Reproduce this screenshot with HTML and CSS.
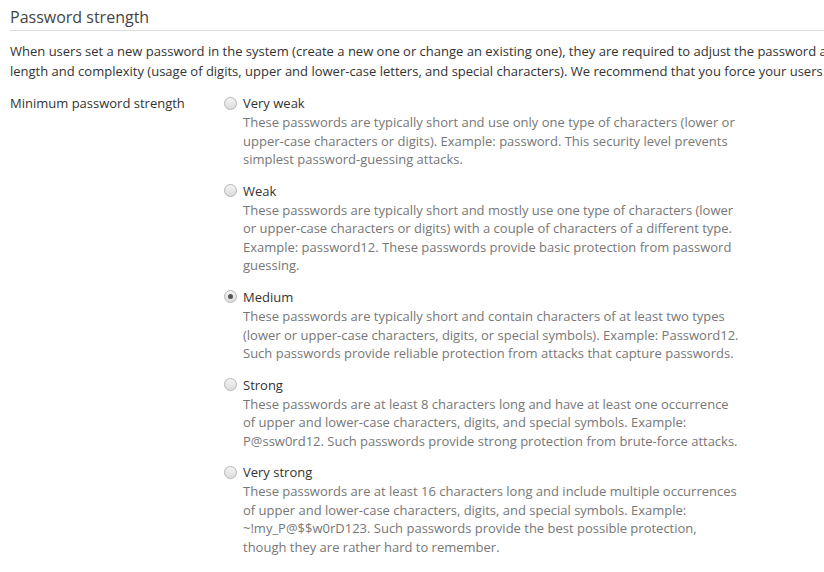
FILE: index.html
```html
<!DOCTYPE html>
<html lang="en">
<head>
<meta charset="utf-8">
<title>Password strength</title>
<link rel="stylesheet" href="styles.css">
</head>
<body>
<div class="page">
  <h2 class="section-title">Password strength</h2>
  <p class="intro">When users set a new password in the system (create a new one or change an existing one), they are required to adjust the password according to the security policy. The password strength is determined by its length and complexity (usage of digits, upper and lower-case letters, and special characters). We recommend that you force your users to use strong passwords.</p>
  <div class="form-row">
    <div class="row-label">Minimum password strength</div>
    <div class="options">
      <label class="option">
        <span class="option-head"><input type="radio" name="strength" class="radio"><span class="option-name">Very weak</span></span>
        <span class="option-desc">These passwords are typically short and use only one type of characters (lower or upper-case characters or digits). Example: password. This security level prevents simplest password-guessing attacks.</span>
      </label>
      <label class="option">
        <span class="option-head"><input type="radio" name="strength" class="radio"><span class="option-name">Weak</span></span>
        <span class="option-desc">These passwords are typically short and mostly use one type of characters (lower or upper-case characters or digits) with a couple of characters of a different type. Example: password12. These passwords provide basic protection from password guessing.</span>
      </label>
      <label class="option">
        <span class="option-head"><input type="radio" name="strength" class="radio" checked><span class="option-name">Medium</span></span>
        <span class="option-desc">These passwords are typically short and contain characters of at least two types (lower or upper-case characters, digits, or special symbols). Example: Password12. Such passwords provide reliable protection from attacks that capture passwords.</span>
      </label>
      <label class="option">
        <span class="option-head"><input type="radio" name="strength" class="radio"><span class="option-name">Strong</span></span>
        <span class="option-desc">These passwords are at least 8 characters long and have at least one occurrence of upper and lower-case characters, digits, and special symbols. Example: P@ssw0rd12. Such passwords provide strong protection from brute-force attacks.</span>
      </label>
      <label class="option">
        <span class="option-head"><input type="radio" name="strength" class="radio"><span class="option-name">Very strong</span></span>
        <span class="option-desc">These passwords are at least 16 characters long and include multiple occurrences of upper and lower-case characters, digits, and special symbols. Example: ~!my_P@$$w0rD123. Such passwords provide the best possible protection, though they are rather hard to remember.</span>
      </label>
    </div>
  </div>
</div>
</body>
</html>
```

FILE: styles.css
```css
html, body {
  margin: 0;
  padding: 0;
  background: #fff;
}
body {
  font-family: "Open Sans", "Noto Sans", sans-serif;
  font-size: 13px;
  color: #333;
  overflow: hidden;
}
.page {
  padding: 0 0 0 10px;
  width: 1400px;
}
.section-title {
  font-size: 16px;
  font-weight: 400;
  color: #444;
  line-height: 22px;
  margin: 6px 0 0 0;
  padding-bottom: 2px;
  border-bottom: 1px solid #ddd;
  width: 814px;
}
.intro {
  margin: 10px 0 0 0;
  line-height: 20px;
  width: 1275px;
}
.form-row {
  display: flex;
  margin-top: 12px;
}
.row-label {
  width: 214px;
  flex: none;
  line-height: 20px;
}
.options {
  display: flex;
  flex-direction: column;
  gap: 12px;
}
.option {
  display: flex;
  flex-direction: column;
  cursor: pointer;
}
.option-head {
  display: flex;
  align-items: center;
  line-height: 20px;
}
.radio {
  appearance: none;
  -webkit-appearance: none;
  width: 13px;
  height: 13px;
  margin: 0 6px 0 0;
  border: 1px solid #b5b5b5;
  border-radius: 50%;
  background: linear-gradient(#f4f4f4, #dcdcdc);
  box-sizing: border-box;
  position: relative;
  flex: none;
}
.radio:checked::after {
  content: "";
  position: absolute;
  left: 3px;
  top: 3px;
  width: 5px;
  height: 5px;
  border-radius: 50%;
  background: #555;
}
.option-name {
  color: #333;
}
.option-desc {
  display: block;
  margin-left: 19px;
  width: 500px;
  color: #777;
  line-height: 1.42857;
}
```
